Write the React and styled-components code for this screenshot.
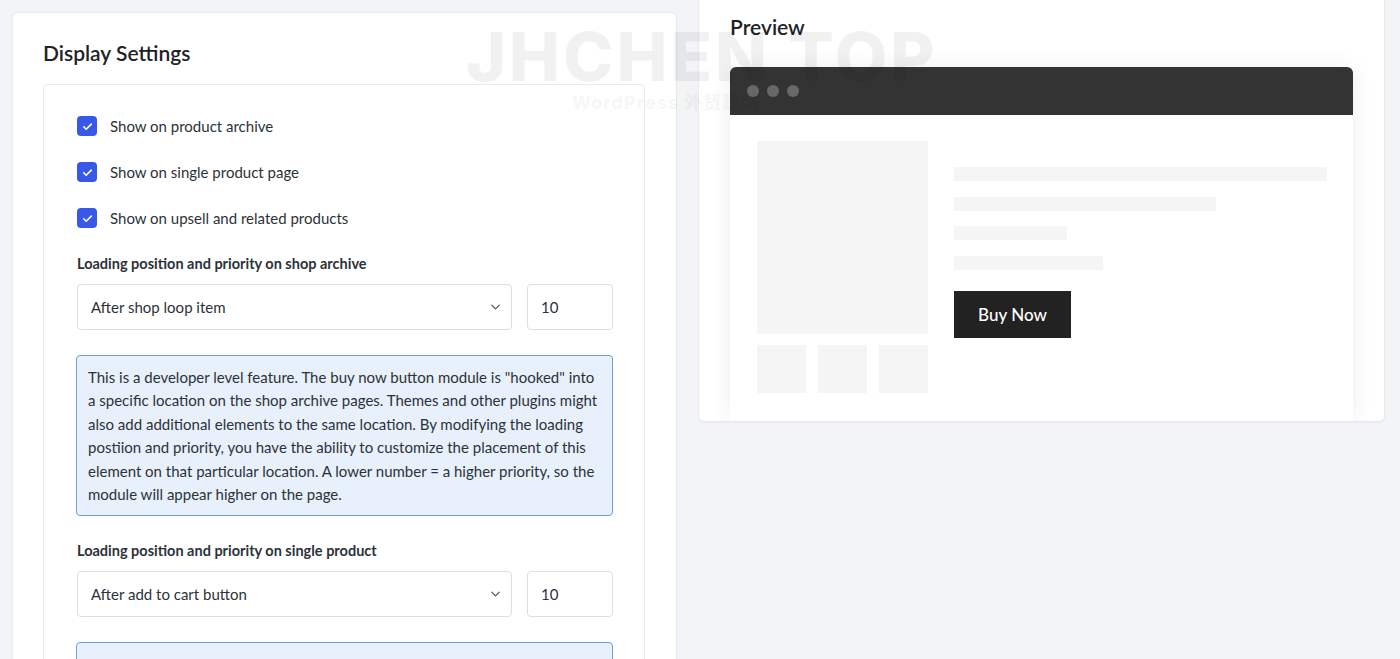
import React from "react";
import styled, { createGlobalStyle } from "styled-components";
import { ChevronDown } from "lucide-react";

const GlobalStyle = createGlobalStyle`
  html, body {
    margin: 0;
    background: #f3f4f6;
    font-family: Lato, "Noto Sans", sans-serif;
    color: #2c3338;
    overflow: hidden;
  }
  * { box-sizing: border-box; }
`;

const Page = styled.div`
  position: relative;
  display: grid;
  grid-template-columns: 665px 1fr;
  column-gap: 21px;
  align-items: start;
  padding: 12px 15px 0 12px;
  height: 659px;
`;

const Card = styled.section`
  background: #fff;
  border: 1px solid #e7e9ec;
  border-radius: 6px;
  box-shadow: 0 1px 2px rgba(0, 0, 0, 0.04);
`;

const SettingsCard = styled(Card)`
  padding: 25px 31px 0 30px;
  min-height: 700px;
`;

const PreviewCard = styled(Card)`
  margin-top: -26px;
  padding: 25px 31px 0 31px;
  overflow: hidden;
`;

const Title = styled.h2`
  margin: 0;
  font-size: 21px;
  line-height: 30px;
  font-weight: 600;
  color: #1d2327;
`;

const Panel = styled.div`
  margin-top: 16px;
  border: 1px solid #e8eaed;
  border-radius: 4px;
  padding: 30px 31px 0 33px;
`;

const CheckRow = styled.label`
  display: flex;
  align-items: center;
  gap: 13px;
  height: 22px;
  margin-bottom: 24px;
  font-size: 15px;
  color: #2c3338;
  cursor: pointer;
`;

const Box = styled.span`
  width: 20px;
  height: 20px;
  border-radius: 4px;
  background: #3858e9;
  display: flex;
  align-items: center;
  justify-content: center;
  flex-shrink: 0;
`;

const FieldLabel = styled.div`
  font-size: 14.5px;
  font-weight: 700;
  line-height: 22px;
  color: #2c3338;
  margin-bottom: 9px;
`;

const FieldRow = styled.div`
  display: grid;
  grid-template-columns: 1fr 86px;
  gap: 15px;
`;

const SelectWrap = styled.div`
  position: relative;
`;

const Select = styled.select`
  width: 100%;
  height: 46px;
  appearance: none;
  border: 1px solid #dcdee2;
  border-radius: 4px;
  background: #fff;
  padding: 0 36px 0 13px;
  font-family: inherit;
  font-size: 15px;
  color: #2c3338;
`;

const Chevron = styled.span`
  position: absolute;
  right: 9px;
  top: 50%;
  transform: translateY(-50%);
  display: flex;
  color: #50575e;
  pointer-events: none;
`;

const NumberInput = styled.input`
  width: 100%;
  height: 46px;
  border: 1px solid #dcdee2;
  border-radius: 4px;
  padding: 0 13px;
  font-family: inherit;
  font-size: 15px;
  color: #2c3338;
`;

const Notice = styled.div`
  margin: 25px 0 24px -1px;
  background: #e8f0fb;
  border: 1px solid #6f9de0;
  border-radius: 4px;
  padding: 10px 11px 9px;
  font-size: 15px;
  line-height: 23.4px;
  color: #2c3338;
`;

const Mock = styled.div`
  margin-top: 25px;
  border-radius: 6px 6px 0 0;
  box-shadow: 0 0 22px rgba(0, 0, 0, 0.07);
  background: #fff;
`;

const MockBar = styled.div`
  height: 48px;
  background: #333;
  border-radius: 6px 6px 0 0;
  display: flex;
  align-items: center;
  gap: 8px;
  padding-left: 17px;
`;

const Dot = styled.span`
  width: 12px;
  height: 12px;
  border-radius: 50%;
  background: #686868;
`;

const MockBody = styled.div`
  display: flex;
  gap: 26px;
  padding: 26px 26px 28px 27px;
`;

const Gallery = styled.div`
  width: 171px;
  flex-shrink: 0;
`;

const Placeholder = styled.div`
  background: #f5f5f5;
  height: ${(p) => p.h}px;
`;

const Thumbs = styled.div`
  margin-top: 11px;
  display: grid;
  grid-template-columns: repeat(3, 1fr);
  gap: 12px;
`;

const Details = styled.div`
  flex: 1;
  padding-top: 26px;
  display: flex;
  flex-direction: column;
  align-items: flex-start;
  gap: 15.5px;
`;

const Bar = styled.div`
  height: 14px;
  background: #f5f5f5;
  width: ${(p) => p.w};
`;

const BuyButton = styled.button`
  margin-top: 6px;
  width: 117px;
  height: 47px;
  border: none;
  background: #222;
  color: #fff;
  font-family: inherit;
  font-size: 17px;
  font-weight: 500;
`;

const Watermark = styled.div`
  position: absolute;
  top: 22px;
  left: 466px;
  pointer-events: none;
  color: rgba(0, 0, 0, 0.055);
  font-family: Inter, "Noto Sans CJK SC", sans-serif;
  font-weight: 800;
  line-height: 1;
`;

const MarkBig = styled.div`
  font-size: 68px;
  letter-spacing: 3px;
`;

const MarkSmall = styled.div`
  margin: 4px 0 0 106px;
  font-size: 18px;
  letter-spacing: 1px;
`;

const checks = [
  "Show on product archive",
  "Show on single product page",
  "Show on upsell and related products",
];

const notice =
  'This is a developer level feature. The buy now button module is "hooked" into a specific location on the shop archive pages. Themes and other plugins might also add additional elements to the same location. By modifying the loading postiion and priority, you have the ability to customize the placement of this element on that particular location. A lower number = a higher priority, so the module will appear higher on the page.';

const CheckItem = ({ label }) => (
  <CheckRow>
    <Box>
      <svg width="13" height="13" viewBox="0 0 24 24" fill="none" stroke="#fff" strokeWidth="3" strokeLinecap="round" strokeLinejoin="round">
        <path d="M5 12.5l4.5 4.5L19 7.5" />
      </svg>
    </Box>
    {label}
  </CheckRow>
);

const Field = ({ label, option }) => (
  <>
    <FieldLabel>{label}</FieldLabel>
    <FieldRow>
      <SelectWrap>
        <Select defaultValue={option}>
          <option>{option}</option>
        </Select>
        <Chevron>
          <ChevronDown size={15} strokeWidth={2} />
        </Chevron>
      </SelectWrap>
      <NumberInput type="text" defaultValue="10" />
    </FieldRow>
    <Notice>{notice}</Notice>
  </>
);

export default function App() {
  return (
    <>
      <GlobalStyle />
      <Page>
        <SettingsCard>
          <Title>Display Settings</Title>
          <Panel>
            {checks.map((c) => (
              <CheckItem key={c} label={c} />
            ))}
            <Field label="Loading position and priority on shop archive" option="After shop loop item" />
            <Field label="Loading position and priority on single product" option="After add to cart button" />
          </Panel>
        </SettingsCard>
        <PreviewCard>
          <Title>Preview</Title>
          <Mock>
            <MockBar>
              <Dot />
              <Dot />
              <Dot />
            </MockBar>
            <MockBody>
              <Gallery>
                <Placeholder h={193} />
                <Thumbs>
                  <Placeholder h={48} />
                  <Placeholder h={48} />
                  <Placeholder h={48} />
                </Thumbs>
              </Gallery>
              <Details>
                <Bar w="100%" />
                <Bar w="262px" />
                <Bar w="113px" />
                <Bar w="149px" />
                <BuyButton>Buy Now</BuyButton>
              </Details>
            </MockBody>
          </Mock>
        </PreviewCard>
        <Watermark>
          <MarkBig>JHCHEN TOP</MarkBig>
          <MarkSmall>WordPress 外贸建站</MarkSmall>
        </Watermark>
      </Page>
    </>
  );
}
